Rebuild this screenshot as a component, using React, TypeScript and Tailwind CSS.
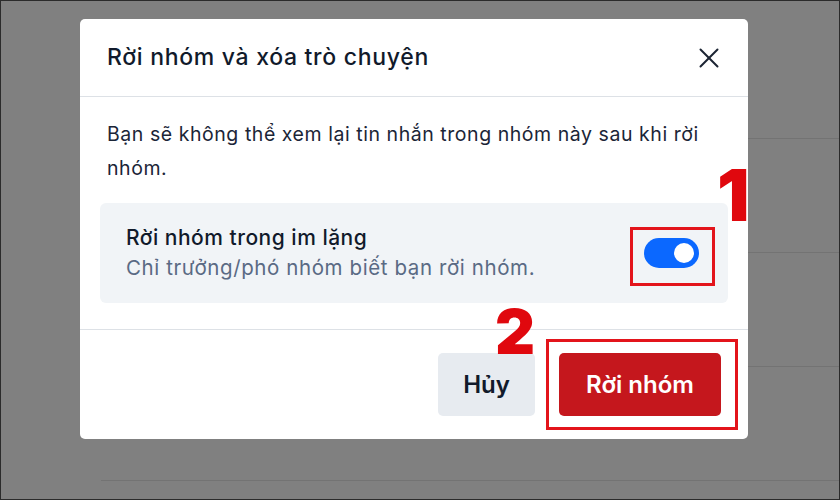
import { X } from "lucide-react";

const FONT = { fontFamily: "Inter, 'Noto Sans', sans-serif" };

function Toggle() {
  return (
    <div className="flex h-[30px] w-[55px] items-center justify-end rounded-full bg-[#0b68ff] px-[5px]">
      <div className="h-[20px] w-[20px] rounded-full bg-white" />
    </div>
  );
}

export default function App() {
  return (
    <div
      className="relative h-[500px] w-[840px] overflow-hidden border border-[#2b2b2b] bg-[#808080]"
      style={FONT}
    >
      {/* dimmed page behind the dialog */}
      <div className="ml-[100px] flex flex-col pt-[24px]">
        {[0, 1, 2, 3].map((i) => (
          <div key={i} className="h-[114px] border-b border-[#737373]" />
        ))}
      </div>

      {/* dialog */}
      <div className="absolute left-[79px] top-[18px] flex w-[668px] flex-col rounded-[5px] bg-white">
        <div className="flex h-[78px] items-center justify-between border-b border-[#dde1e6] pl-[27px] pr-[22px]">
          <h2 className="text-[23px] font-medium tracking-[0.7px] text-[#111a2b]">Rời nhóm và xóa trò chuyện</h2>
          <X className="h-[34px] w-[34px] text-[#1b2433]" strokeWidth={1.4} />
        </div>

        <div className="flex flex-col border-b border-[#dde1e6] pb-[26px] pt-[20px]">
          <p className="px-[27px] text-[19.5px] leading-[34px] tracking-[0.55px] text-[#1b2537]">
            Bạn sẽ không thể xem lại tin nhắn trong nhóm này sau khi rời nhóm.
          </p>
          <div className="relative mx-[20px] mt-[18px] flex h-[100px] items-center justify-between rounded-[6px] bg-[#f1f4f7] pl-[26px] pr-[29px]">
            <div className="flex flex-col">
              <span className="text-[21px] font-medium leading-[30px] tracking-[0.5px] text-[#111a2b]">
                Rời nhóm trong im lặng
              </span>
              <span className="text-[20.5px] leading-[30px] tracking-[0.6px] text-[#5a6a84]">
                Chỉ trưởng/phó nhóm biết bạn rời nhóm.
              </span>
            </div>
            <Toggle />
            <div className="absolute left-[530px] top-[24px] h-[59px] w-[85px] border-[3px] border-[#e3141b]" />
          </div>
        </div>

        <div className="relative flex justify-end gap-[24px] pb-[23px] pr-[27px] pt-[23px]">
          <button className="flex h-[63px] w-[97px] items-center justify-center rounded-[5px] bg-[#e7ebf0] text-[24px] font-semibold text-[#111a2b]">
            Hủy
          </button>
          <button className="flex h-[63px] w-[162px] items-center justify-center rounded-[5px] bg-[#c5171d] text-[24px] font-semibold text-white">
            Rời nhóm
          </button>
          <div className="absolute left-[466px] top-[9px] h-[91px] w-[192px] border-[3px] border-[#e3141b]" />
        </div>
      </div>

      {/* step numbers */}
      <span className="absolute left-[716px] top-[158px] text-[72px] font-black leading-none text-[#e0080e]">1</span>
      <span className="absolute left-[494px] top-[300px] text-[62px] font-black leading-none text-[#e0080e]">2</span>
    </div>
  );
}
